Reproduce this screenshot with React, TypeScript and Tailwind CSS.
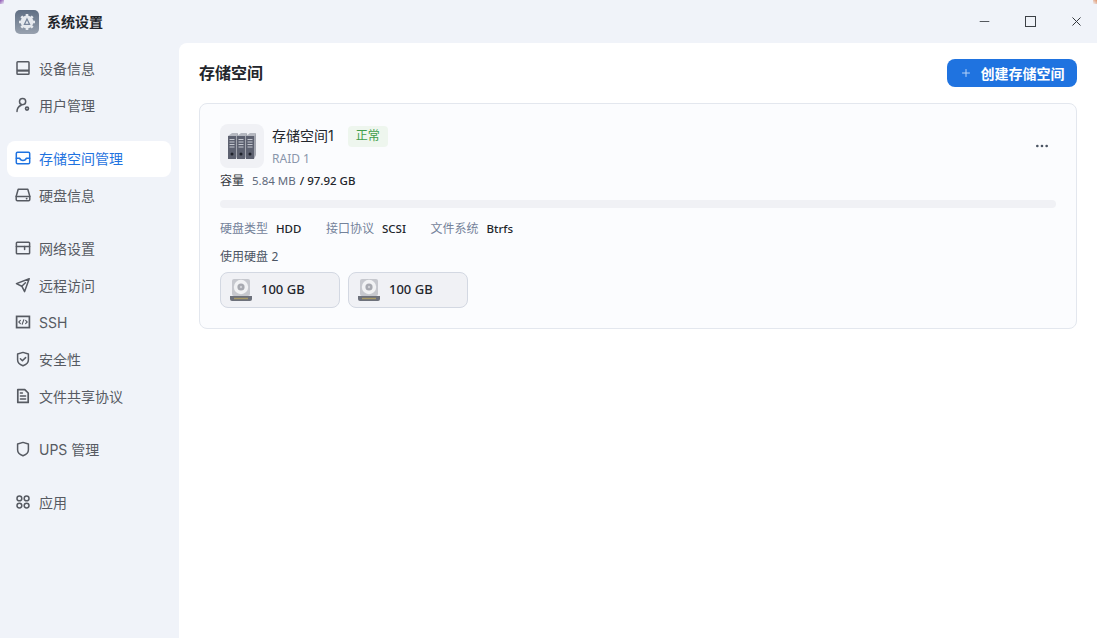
import { Plus, X, Minus, Ellipsis } from "lucide-react";
import type { ReactNode } from "react";

const font = "font-['Inter','Noto_Sans_CJK_SC',sans-serif]";
const numFont = "font-['Noto_Sans','Noto_Sans_CJK_SC',sans-serif]";

function Glyph({ children }: { children: ReactNode }) {
  return (
    <svg width="16" height="16" viewBox="0 0 16 16" fill="none" stroke="currentColor" strokeWidth="1.5" strokeLinecap="round" strokeLinejoin="round">
      {children}
    </svg>
  );
}

const icons: Record<string, ReactNode> = {
  device: (
    <Glyph>
      <rect x="2" y="1.7" width="12" height="12.6" rx="0.8" />
      <path d="M2 10.6h12" strokeWidth="2.2" strokeLinecap="butt" />
    </Glyph>
  ),
  user: (
    <Glyph>
      <circle cx="7.6" cy="4.6" r="3.1" />
      <path d="M2 14.6c0-3.2 1.6-5.4 4.2-6.4" />
      <circle cx="12" cy="11.6" r="1.5" strokeWidth="1.6" />
    </Glyph>
  ),
  storage: (
    <Glyph>
      <rect x="1.3" y="2.2" width="13.4" height="11.6" rx="1.2" />
      <path d="M1.3 8.2h3.4c.5 1.5 1.7 2.2 3.3 2.2s2.8-.7 3.3-2.2h3.4" />
    </Glyph>
  ),
  disk: (
    <Glyph>
      <path d="M3.2 2.2h9.6l2 7v3.4a1.2 1.2 0 0 1-1.2 1.2H2.4a1.2 1.2 0 0 1-1.2-1.2V9.2z" />
      <path d="M1.2 9.4h13.6" />
      <path d="M11.6 11.6h.1" strokeWidth="1.8" />
    </Glyph>
  ),
  network: (
    <Glyph>
      <rect x="1.4" y="2.2" width="13.2" height="11.6" rx="0.8" />
      <path d="M1.4 6.4h13.2" />
      <path d="M9.6 6.4v3" />
    </Glyph>
  ),
  remote: (
    <Glyph>
      <path d="M14.2 1.8 1.4 6.6l5.4 2.6 2.8 5.4z" />
      <path d="M6.8 9.2 10.4 5.8" />
    </Glyph>
  ),
  ssh: (
    <Glyph>
      <rect x="1.6" y="2.4" width="12.8" height="11.2" strokeWidth="1.7" strokeLinejoin="miter" />
      <path d="M5.4 6.4 3.8 8l1.6 1.6M10.6 6.4 12.2 8l-1.6 1.6M8.8 5.8 7.2 10.2" strokeWidth="1.1" />
    </Glyph>
  ),
  shield: (
    <Glyph>
      <path d="M8 1.4 13.4 3v6c0 3-2.6 4.8-5.4 5.8C5.2 13.8 2.6 12 2.6 9V3z" />
      <path d="m5.4 7.8 2 2 3.2-3.2" />
    </Glyph>
  ),
  file: (
    <Glyph>
      <path d="M2.8 1.6h7l3.4 3.4v9.4H2.8z" strokeWidth="1.7" />
      <path d="M5.4 8h5.2M5.4 11h5.2M5.4 5h2" />
    </Glyph>
  ),
  ups: (
    <Glyph>
      <path d="M8 1.4 13.4 3v6c0 3-2.6 4.8-5.4 5.8C5.2 13.8 2.6 12 2.6 9V3z" />
    </Glyph>
  ),
  apps: (
    <Glyph>
      <circle cx="4.4" cy="4.4" r="2.4" />
      <circle cx="11.6" cy="4.4" r="2.4" />
      <circle cx="4.4" cy="11.6" r="2.4" />
      <circle cx="11.6" cy="11.6" r="2.4" />
    </Glyph>
  ),
};

const groups = [
  [
    { key: "device", label: "设备信息" },
    { key: "user", label: "用户管理" },
  ],
  [
    { key: "storage", label: "存储空间管理", active: true },
    { key: "disk", label: "硬盘信息" },
  ],
  [
    { key: "network", label: "网络设置" },
    { key: "remote", label: "远程访问" },
    { key: "ssh", label: "SSH" },
    { key: "shield", label: "安全性" },
    { key: "file", label: "文件共享协议" },
  ],
  [{ key: "ups", label: "UPS 管理" }],
  [{ key: "apps", label: "应用" }],
];

function NavItem({ icon, label, active }: { icon: string; label: string; active?: boolean }) {
  return (
    <div className={`mb-px flex h-9 items-center gap-[8px] rounded-lg pb-[2px] pl-[8px] text-[14px] ${active ? "bg-white text-[#1f73e0]" : "text-[#565a62]"}`}>
      {icons[icon]}
      <span>{label}</span>
    </div>
  );
}

function AppLogo() {
  return (
    <div className="flex size-6 items-center justify-center rounded-[5px] bg-gradient-to-b from-[#5f6e83] to-[#98a1af]">
      <svg width="20" height="20" viewBox="0 0 20 20">
        <circle cx="10" cy="10" r="6.4" fill="#e6e9ee" />
        <path d="M10 2v3M10 15v3M2 10h3M15 10h3M4.3 4.3l2.2 2.2M13.5 13.5l2.2 2.2M15.7 4.3l-2.2 2.2M6.5 13.5l-2.2 2.2" stroke="#e6e9ee" strokeWidth="2.6" />
        <path d="M10 7 12.6 12.4H7.4z" fill="#e6e9ee" stroke="#76849a" strokeWidth="1.2" />
      </svg>
    </div>
  );
}

function ServerIcon() {
  return (
    <svg width="30" height="28" viewBox="0 0 30 28">
      {[0, 9, 18].map((x) => (
        <g key={x} transform={`translate(${x} 0)`}>
          <path d="M1 4 5 1h6l-2 3z" fill="#b5b8c0" />
          <path d="M9 4l2-3v22l-2 4z" fill="#a2a5ae" />
          <rect x="1" y="4" width="8" height="23" fill="#5d6170" />
          <path d="M2.5 7.5h5M2.5 10h5M2.5 12.5h5M2.5 15h5" stroke="#c4c7cf" strokeWidth="1" />
          <circle cx="5" cy="22" r="1.5" fill="#1f222b" />
        </g>
      ))}
    </svg>
  );
}

function DriveIcon() {
  return (
    <svg width="22" height="22" viewBox="0 0 22 22">
      <rect x="2" y="0" width="18" height="17" rx="2" fill="#c6c8ce" />
      <circle cx="11" cy="8" r="7.2" fill="#f1f2f4" />
      <circle cx="11" cy="8" r="3.6" fill="#a7a9b0" />
      <circle cx="11" cy="8" r="1.2" fill="#cfd0d5" />
      <path d="M0 17h22v3a2 2 0 0 1-2 2H2a2 2 0 0 1-2-2z" fill="#6d717b" />
      <path d="M4 19.5h14" stroke="#a89a66" strokeWidth="1.4" />
    </svg>
  );
}

function Spec({ label, value }: { label: string; value: string }) {
  return (
    <div className="flex items-center gap-2">
      <span className="text-[#74829a]">{label}</span>
      <span className={`${numFont} text-[11.5px] font-medium text-[#22252b]`}>{value}</span>
    </div>
  );
}

function DriveChip() {
  return (
    <div className="flex h-9 w-[120px] items-center gap-[9px] rounded-lg border border-[#d3d8e2] bg-[#f0f1f5] pl-[9px] text-[13px] font-medium text-[#22252b]">
      <DriveIcon />
      <span className={numFont}>100 GB</span>
    </div>
  );
}

export default function App() {
  return (
    <div className={`${font} relative flex h-[638px] w-[1097px] flex-col overflow-hidden bg-[#f0f3f9]`}>
      <div className="absolute left-0 top-0 size-[4px] bg-gradient-to-br from-[#8a4fb0] to-transparent" />
      <div className="absolute right-0 top-0 size-[4px] bg-gradient-to-bl from-[#e0946a] to-transparent" />
      <header className="flex h-[43px] shrink-0 items-center pl-[15px]">
        <AppLogo />
        <span className="ml-2 text-[14px] font-semibold text-[#22252b]">系统设置</span>
        <div className="ml-auto -mr-[2px] flex items-center text-[#33373d]">
          <div className="flex w-[46px] justify-center"><Minus size={15} strokeWidth={1.8} className="text-[#55595f]" /></div>
          <div className="flex w-[46px] justify-center"><div className="size-[11px] border-[1.5px] border-[#3c4046]" /></div>
          <div className="flex w-[46px] justify-center"><X size={15} strokeWidth={1.6} /></div>
        </div>
      </header>
      <div className="flex min-h-0 flex-1">
        <aside className="flex w-[179px] shrink-0 flex-col gap-4 px-[7px] pt-[8px]">
          {groups.map((group, i) => (
            <div key={i} className="w-[164px]">
              {group.map((item) => (
                <NavItem key={item.key} icon={item.key} label={item.label} active={item.active} />
              ))}
            </div>
          ))}
        </aside>
        <main className="flex-1 rounded-tl-lg bg-white px-5 pt-4">
          <div className="flex h-7 items-center justify-between">
            <h1 className="text-[16px] font-semibold text-[#22252b]">存储空间</h1>
            <button className="flex h-7 w-[130px] items-center justify-center gap-[9px] rounded-lg bg-[#1f73e0] text-[14px] font-semibold text-white">
              <Plus size={12} strokeWidth={2} className="text-[#b9d4f7]" />
              <span>创建存储空间</span>
            </button>
          </div>
          <section className="relative mt-[16px] h-[226px] rounded-lg border border-[#e3e7ee] bg-[#fbfcfe] px-5 pt-5">
            <div className="flex items-start">
              <div className="flex size-11 items-center justify-center rounded-lg bg-[#f0f1f5]">
                <ServerIcon />
              </div>
              <div className="ml-2">
                <div className="flex h-6 items-center">
                  <span className="mb-[2px] text-[14px] text-[#22252b]">存储空间1</span>
                  <span className="ml-[14px] flex h-[21px] w-[40px] items-center justify-center rounded bg-[#eef6ee] text-[12px] text-[#3f9e4a]">正常</span>
                </div>
                <div className={`${numFont} mt-[2px] text-[12px] leading-[18px] text-[#8a96ab]`}>RAID 1</div>
              </div>
            </div>
            <Ellipsis size={16} className="absolute right-[26px] top-[34px] text-[#4b5563]" />
            <div className="mt-[4px] flex h-[18px] items-center text-[12px]">
              <span className="text-[#33373d]">容量</span>
              <span className={`${numFont} ml-2 text-[11.5px] text-[#5f6a7c]`}>5.84 MB</span>
              <span className={`${numFont} ml-1 text-[11.5px] font-medium text-[#22252b]`}>/ 97.92 GB</span>
            </div>
            <div className="mt-[10px] h-2 w-full rounded-full bg-[#f0f1f5]" />
            <div className="mt-[12px] flex h-[18px] items-center gap-[24.5px] text-[12px]">
              <Spec label="硬盘类型" value="HDD" />
              <Spec label="接口协议" value="SCSI" />
              <Spec label="文件系统" value="Btrfs" />
            </div>
            <div className="mt-[10px] text-[12px] leading-[18px] text-[#4b5563]">
              使用硬盘 <span className={numFont}>2</span>
            </div>
            <div className="mt-[6px] flex gap-2">
              <DriveChip />
              <DriveChip />
            </div>
          </section>
        </main>
      </div>
    </div>
  );
}
